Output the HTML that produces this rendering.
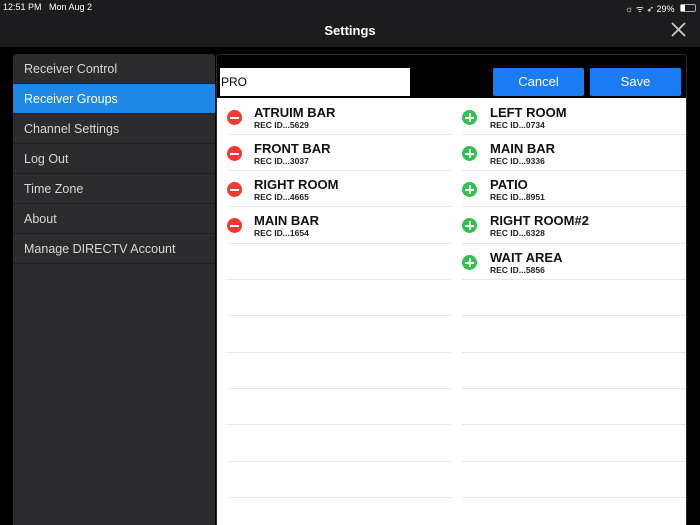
<!DOCTYPE html>
<html><head><meta charset="utf-8"><style>
*{margin:0;padding:0;box-sizing:border-box}
html,body{width:700px;height:525px;overflow:hidden}
body{background:#000;font-family:"Liberation Sans",sans-serif;position:relative}
.hdr{position:absolute;left:0;top:0;width:700px;height:47px;background:#1c1c1e}
.st{position:absolute;top:2px;font-size:9px;color:#fff}
.title{position:absolute;top:23px;width:700px;text-align:center;color:#fff;font-weight:bold;font-size:13px}
.side{position:absolute;left:13px;top:54px;width:202px;height:471px;background:#2c2c2e;border-radius:3px 3px 0 0}
.it{height:30px;line-height:30px;padding-left:11px;color:#d8d8d8;font-size:12.5px;border-bottom:1px solid #1f1f21}
.it.sel{background:#1f88e6;color:#fff}
.panel{position:absolute;left:216px;top:54px;width:471px;height:471px;background:#000;border:1px solid #2a2a2a;border-bottom:none;border-radius:3px 3px 0 0}
.white{position:absolute;left:217px;top:98px;width:469px;height:427px;background:#fff}
.inp{position:absolute;left:220px;top:68px;width:190px;height:28px;background:#fff;font-size:12px;line-height:28px;padding-left:1px}
.btn{position:absolute;top:68px;width:91px;height:28px;background:#1a7cf5;color:#fff;font-size:13px;text-align:center;line-height:28px;border-radius:2px}
.sep{position:absolute;height:1px;background:#e6e6e6}
.ic{position:absolute;width:15px;height:15px;border-radius:50%}
.ic::after{content:"";position:absolute;left:3px;top:6.5px;width:9px;height:2px;background:#fff}
.plus::before{content:"";position:absolute;left:6.5px;top:3px;width:2px;height:9px;background:#fff}
.red{background:#f33a32}.grn{background:#2fc24f}
.nm{position:absolute;font-weight:bold;font-size:13px;color:#111}
.id{position:absolute;font-weight:bold;font-size:8.5px;color:#222}
</style></head><body>
<div class="hdr"></div>
<div class="st" style="left:3px">12:51 PM&nbsp;&nbsp;&nbsp;Mon Aug 2</div>
<div class="st" style="left:625px">☼ ᯤ ➶ 29%</div>
<div style="position:absolute;left:680px;top:4px;width:16px;height:8px;border:1px solid #aaa;border-radius:2px"><div style="width:4px;height:6px;background:#fff"></div></div>
<div class="title">Settings</div>
<svg style="position:absolute;left:671px;top:22px" width="15" height="15"><path d="M1 1L14 14M14 1L1 14" stroke="#ccc" stroke-width="1.8"/></svg>
<div class="side">
<div class="it">Receiver Control</div>
<div class="it sel">Receiver Groups</div>
<div class="it">Channel Settings</div>
<div class="it">Log Out</div>
<div class="it">Time Zone</div>
<div class="it">About</div>
<div class="it">Manage DIRECTV Account</div>
</div>
<div class="panel"></div>
<div class="white"></div>
<div class="inp">PRO</div>
<div class="btn" style="left:493px">Cancel</div>
<div class="btn" style="left:590px">Save</div>

<div class="sep" style="left:227px;top:134px;width:225px"></div><div class="sep" style="left:462px;top:134px;width:224px"></div>
<div class="sep" style="left:227px;top:170px;width:225px"></div><div class="sep" style="left:462px;top:170px;width:224px"></div>
<div class="sep" style="left:227px;top:206px;width:225px"></div><div class="sep" style="left:462px;top:206px;width:224px"></div>
<div class="sep" style="left:227px;top:243px;width:225px"></div><div class="sep" style="left:462px;top:243px;width:224px"></div>
<div class="sep" style="left:227px;top:279px;width:225px"></div><div class="sep" style="left:462px;top:279px;width:224px"></div>
<div class="sep" style="left:227px;top:315px;width:225px"></div><div class="sep" style="left:462px;top:315px;width:224px"></div>
<div class="sep" style="left:227px;top:352px;width:225px"></div><div class="sep" style="left:462px;top:352px;width:224px"></div>
<div class="sep" style="left:227px;top:388px;width:225px"></div><div class="sep" style="left:462px;top:388px;width:224px"></div>
<div class="sep" style="left:227px;top:424px;width:225px"></div><div class="sep" style="left:462px;top:424px;width:224px"></div>
<div class="sep" style="left:227px;top:461px;width:225px"></div><div class="sep" style="left:462px;top:461px;width:224px"></div>
<div class="sep" style="left:227px;top:497px;width:225px"></div><div class="sep" style="left:462px;top:497px;width:224px"></div>

<div class="ic red" style="left:227px;top:110px"></div><div class="nm" style="left:254px;top:105px">ATRUIM BAR</div><div class="id" style="left:254px;top:120px">REC ID...5629</div>
<div class="ic red" style="left:227px;top:146px"></div><div class="nm" style="left:254px;top:141px">FRONT BAR</div><div class="id" style="left:254px;top:156px">REC ID...3037</div>
<div class="ic red" style="left:227px;top:182px"></div><div class="nm" style="left:254px;top:177px">RIGHT ROOM</div><div class="id" style="left:254px;top:192px">REC ID...4665</div>
<div class="ic red" style="left:227px;top:218px"></div><div class="nm" style="left:254px;top:213px">MAIN BAR</div><div class="id" style="left:254px;top:228px">REC ID...1654</div>

<div class="ic grn plus" style="left:462px;top:110px"></div><div class="nm" style="left:490px;top:105px">LEFT ROOM</div><div class="id" style="left:490px;top:120px">REC ID...0734</div>
<div class="ic grn plus" style="left:462px;top:146px"></div><div class="nm" style="left:490px;top:141px">MAIN BAR</div><div class="id" style="left:490px;top:156px">REC ID...9336</div>
<div class="ic grn plus" style="left:462px;top:182px"></div><div class="nm" style="left:490px;top:177px">PATIO</div><div class="id" style="left:490px;top:192px">REC ID...8951</div>
<div class="ic grn plus" style="left:462px;top:218px"></div><div class="nm" style="left:490px;top:213px">RIGHT ROOM#2</div><div class="id" style="left:490px;top:228px">REC ID...6328</div>
<div class="ic grn plus" style="left:462px;top:255px"></div><div class="nm" style="left:490px;top:250px">WAIT AREA</div><div class="id" style="left:490px;top:265px">REC ID...5856</div>
</body></html>
